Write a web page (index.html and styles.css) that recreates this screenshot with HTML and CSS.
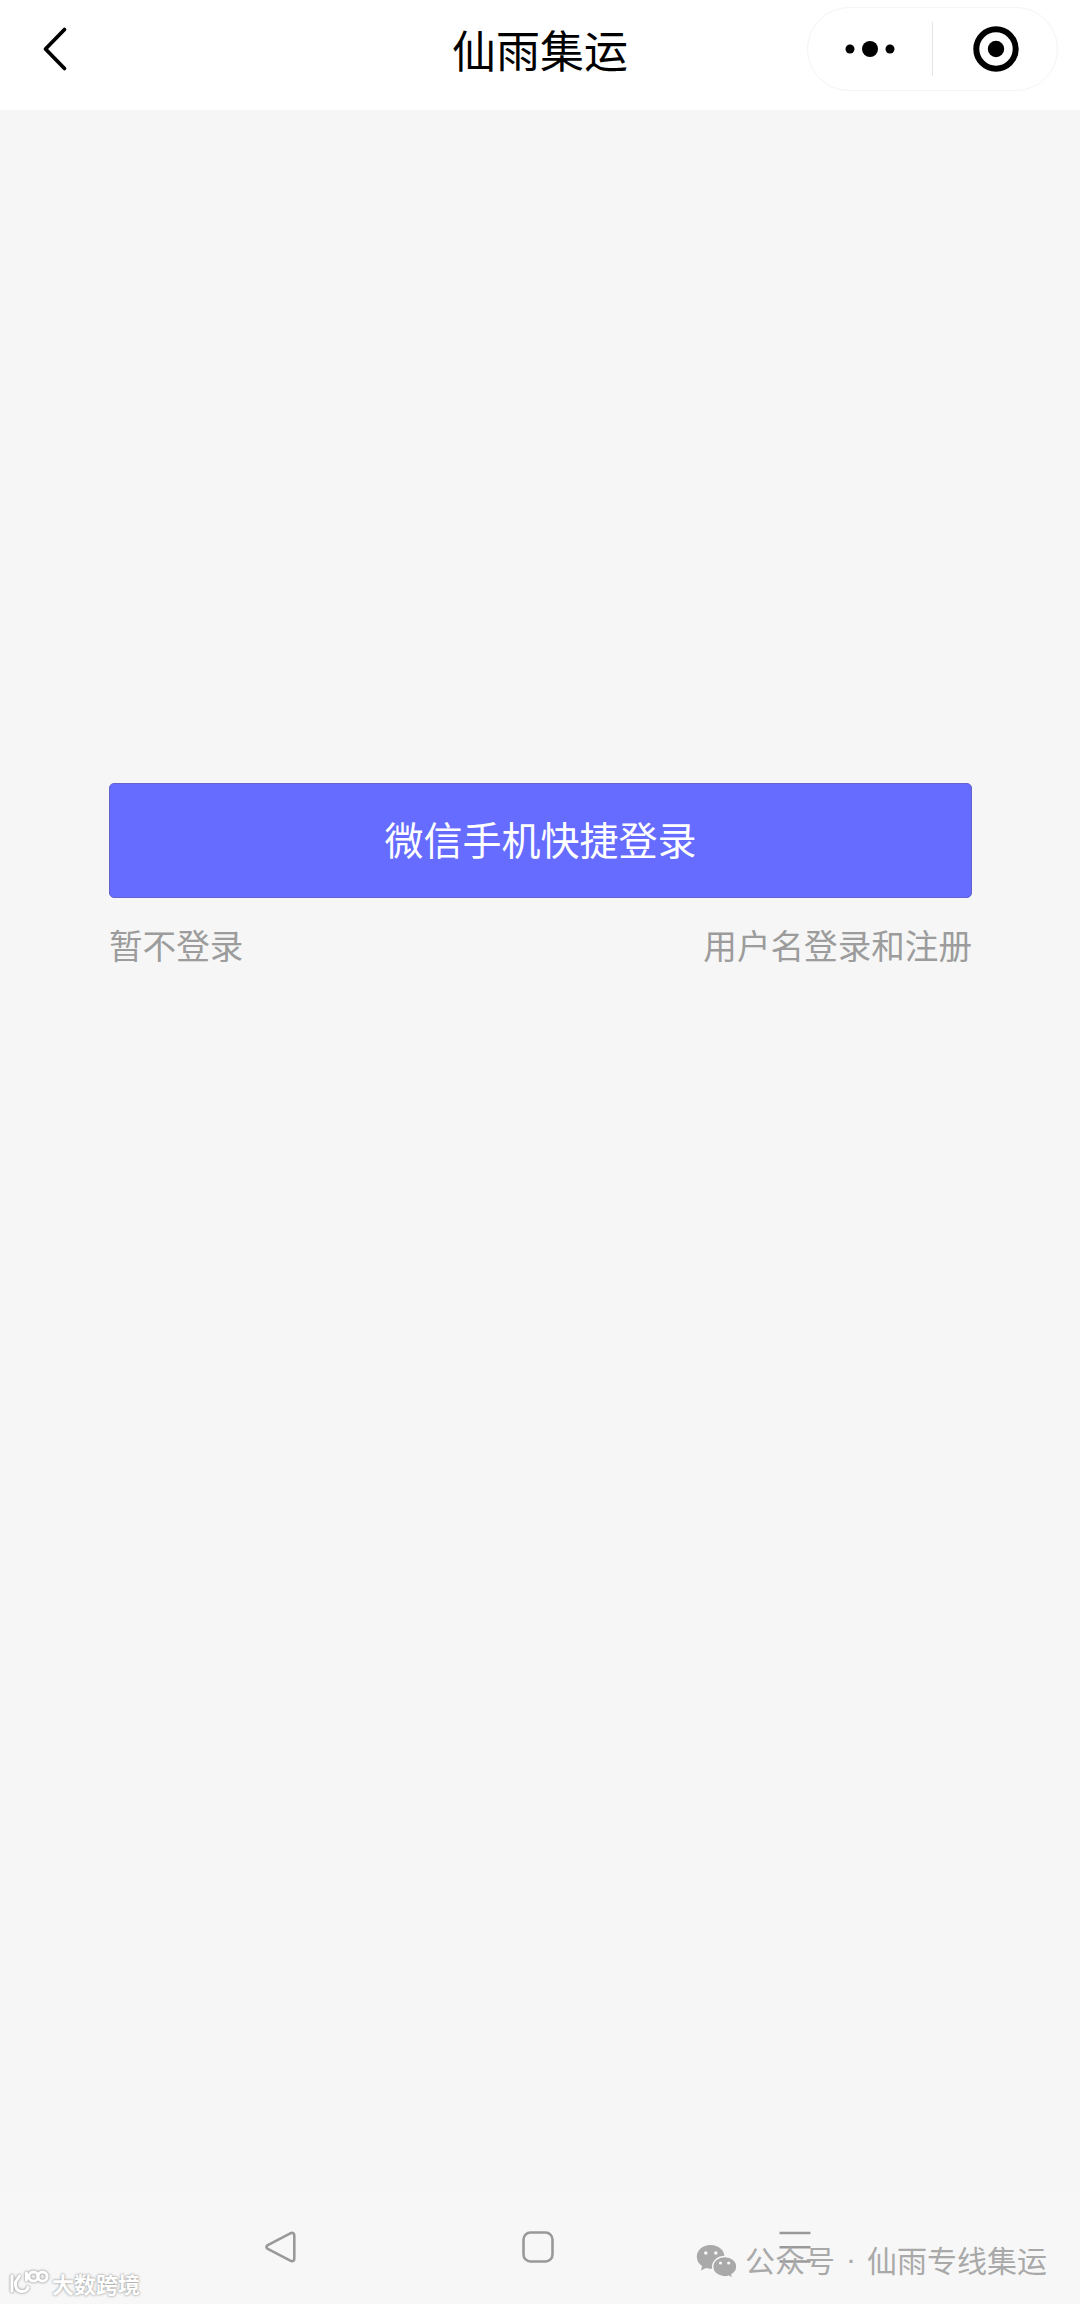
FILE: index.html
```html
<!DOCTYPE html>
<html lang="zh-CN">
<head>
<meta charset="utf-8">
<title>仙雨集运</title>
<link rel="stylesheet" href="styles.css">
</head>
<body>
<div class="app">
  <header class="header">
    <svg class="back" width="30" height="50" viewBox="0 0 30 50"><path d="M25.500 5.500 6.500 25l19 19.500" fill="none" stroke="#000" stroke-width="3.800" stroke-linecap="round" stroke-linejoin="round"/></svg>
    <h1 class="title">仙雨集运</h1>
    <div class="capsule">
      <svg class="more" width="50" height="18" viewBox="0 0 50 18"><circle cx="5" cy="9" r="4.500"/><circle cx="25" cy="9" r="8"/><circle cx="45" cy="9" r="4.500"/></svg>
      <span class="divider"></span>
      <svg class="close" width="46" height="46" viewBox="0 0 46 46"><circle cx="23" cy="23" r="19.700" fill="none" stroke="#000" stroke-width="6"/><circle cx="23" cy="23" r="8.200"/></svg>
    </div>
  </header>
  <main class="content">
    <button class="login" type="button">微信手机快捷登录</button>
    <div class="links"><span>暂不登录</span><span>用户名登录和注册</span></div>
  </main>
  <footer class="navbar">
    <svg width="32" height="32" viewBox="0 0 32 32"><path d="M2.800 14.200 25.300 2.300q4-1.500 4 2.500v22.400q0 4-4 2.500L2.800 17.800q-2.800-1.800 0-3.600z"/></svg>
    <svg width="32" height="32" viewBox="0 0 32 32"><rect x="1.500" y="1.500" width="29" height="29" rx="7"/></svg>
    <svg width="32" height="32" viewBox="0 0 32 32"><path d="M.5 2h31M.5 16.200h31M.5 30.500h31"/></svg>
  </footer>
  <div class="account">
    <svg width="42" height="36" viewBox="0 0 42 36">
      <path d="M14.500 1C6.500 1 .8 6.200.8 12.800c0 4 2.100 7.300 5.300 9.300L5 26.500l5-2.400c1.500.4 3 .6 4.500.6C22.500 24.700 28.500 19.500 28.500 12.800S22.500 1 14.500 1z"/>
      <path class="cut" d="M28.800 12.500c-6.900 0-12.100 4.500-12.100 10.200s5.200 10.200 12.100 10.200c1.400 0 2.700-.2 3.900-.6l4.400 2.200-1.200-3.900c3-1.800 5-4.600 5-7.900 0-5.700-5.200-10.200-12.100-10.200z"/>
      <g class="eyes"><circle cx="9.800" cy="9" r="1.800"/><circle cx="19.800" cy="9" r="1.800"/><circle cx="24.500" cy="19" r="1.600"/><circle cx="32.700" cy="19" r="1.600"/></g>
    </svg>
    <span class="kind">公众号</span><span class="dot">·</span><span>仙雨专线集运</span>
  </div>
  <div class="brand">
    <svg width="42" height="28" viewBox="0 0 42 28"><path d="M4 7v15M11.500 7 7.500 13q-1 9 6.500 9.500 5 0 6-4M18.500 4v7"/><circle cx="25.500" cy="7.500" r="4.600"/><circle cx="34.500" cy="7.500" r="4.600"/></svg>
    <span>大数跨境</span>
  </div>
</div>
</body>
</html>
```
FILE: styles.css
```css
* { box-sizing: border-box; }
body { margin: 0; background: #f6f6f6; font-family: "Noto Sans CJK SC", sans-serif; }
.app { position: relative; display: flex; flex-direction: column; width: 1080px; height: 2304px; overflow: hidden; }
.header { display: grid; grid-template-columns: 1fr auto 1fr; align-items: center; height: 110px; padding: 0 22px 12px 39px; background: #fff; }
.back { display: block; }
.title { margin: 0 0 0 -17px; font-size: 44px; line-height: 64px; font-weight: 400; color: #000; padding-bottom: 1px; }
.capsule { display: flex; align-items: center; justify-self: end; width: 251px; height: 84px; border: 1.500px solid #f4f4f4; border-radius: 42px; }
.more { margin-left: 37px; }
.divider { width: 1px; height: 54px; margin-left: 37px; background: #e5e5e5; }
.close { margin-left: 40px; }
.content { flex: 1; padding: 673px 108px 0 109px; }
.login { display: block; width: 100%; height: 115px; padding: 0 0 4px; border: 1px solid #6462cf; border-radius: 5px; background: #656cff; color: #fff; font: 400 39px/109px "Noto Sans CJK SC", sans-serif; }
.links { display: flex; justify-content: space-between; margin-top: 22px; font-size: 33.600px; line-height: 50px; font-weight: 400; color: #9c9c9c; }
.navbar { display: flex; height: 112px; padding: 39px 0 0 265px; gap: 225px; background: #f7f7f7; }
.navbar svg { fill: none; stroke: #999; stroke-width: 2.600; stroke-linejoin: round; }
.account { position: absolute; left: 696px; top: 2237px; display: flex; align-items: center; height: 44px; font-size: 30px; line-height: 44px; color: #a9a9a9; white-space: nowrap; }
.account svg { fill: #a9a9a9; margin-top: 5px; }
.account .cut { stroke: #f7f7f7; stroke-width: 1.500; }
.account .eyes { fill: #f7f7f7; }
.kind { margin-left: 7px; }
.dot { width: 32px; text-align: center; font-family: "Liberation Sans", sans-serif; }
.brand { position: absolute; left: 8px; top: 2266px; display: flex; align-items: center; gap: 2px; height: 34px; color: #fff; font-size: 22px; line-height: 34px; font-weight: 700; text-shadow: 0 0 2px #999, 0 0 3px #bbb; }
.brand svg { fill: none; stroke: #fff; stroke-width: 3; stroke-linecap: round; filter: drop-shadow(0 0 1px #999) drop-shadow(0 0 1px #ccc); }
```
